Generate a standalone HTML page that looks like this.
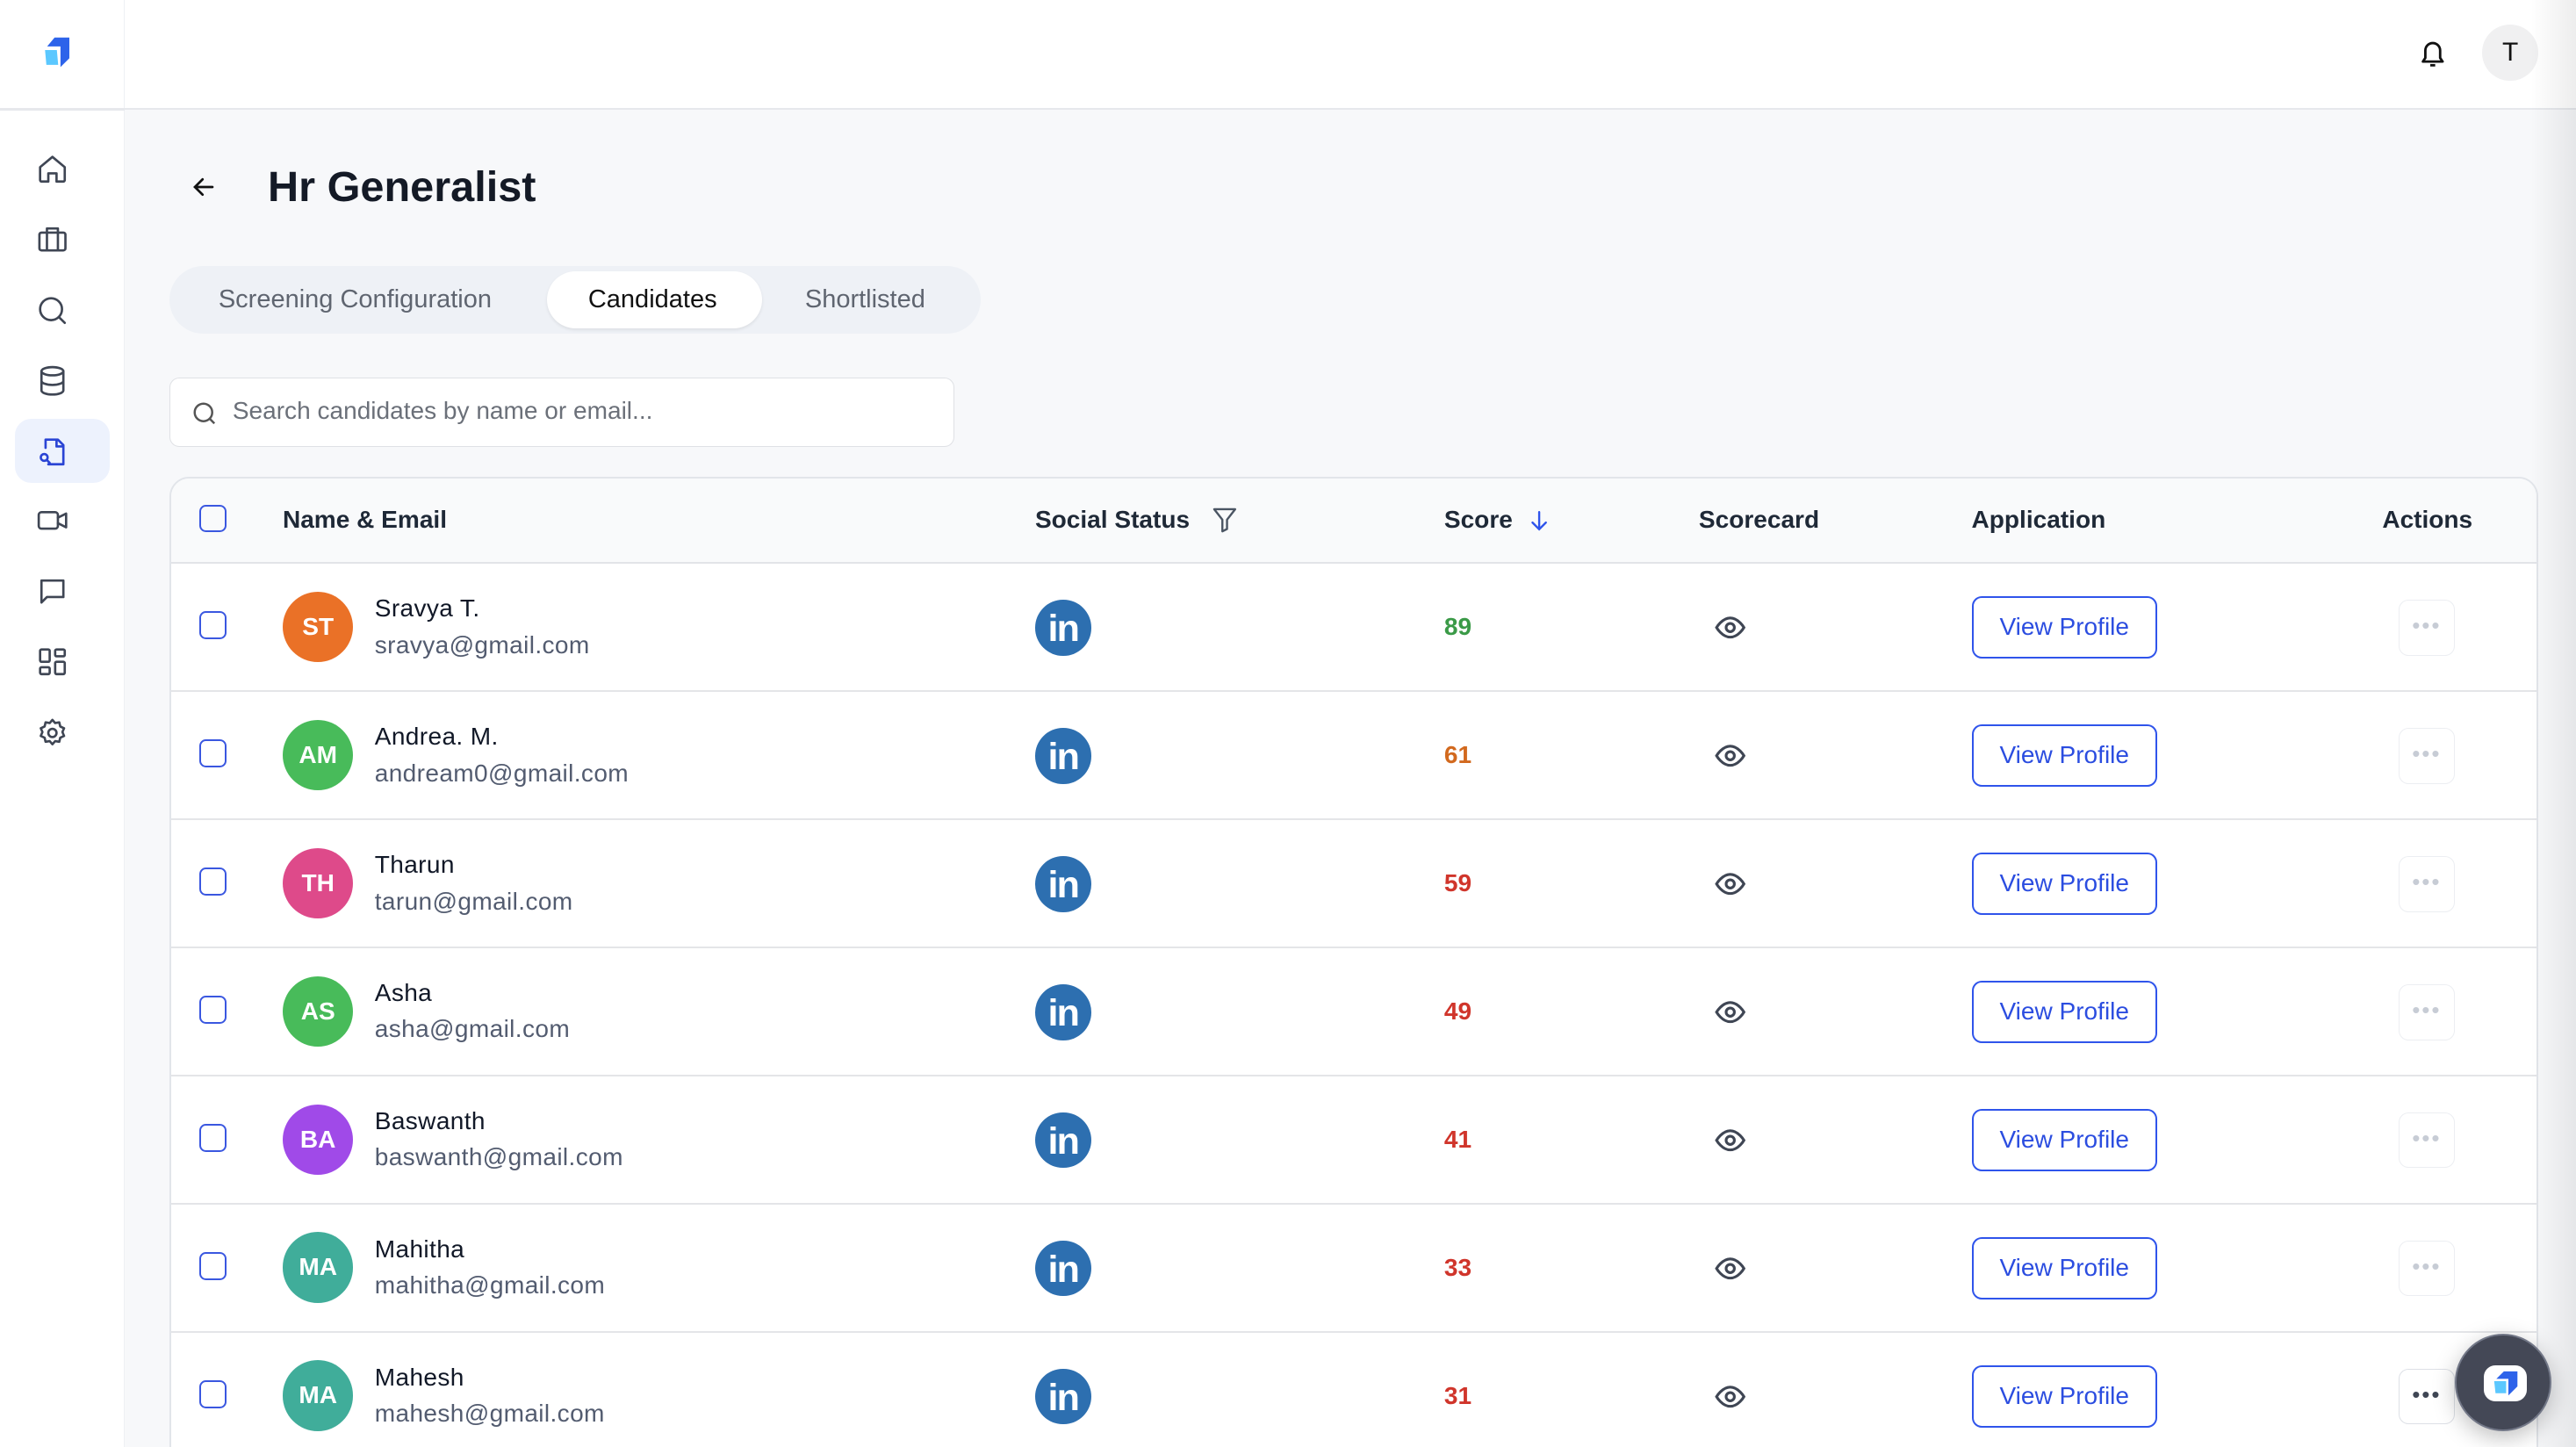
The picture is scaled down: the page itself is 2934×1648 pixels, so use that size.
<!DOCTYPE html>
<html><head><meta charset="utf-8">
<style>
*{box-sizing:border-box;margin:0;padding:0}
html,body{width:2934px;height:1648px;overflow:hidden;background:#f7f8fa}
#w{zoom:1.87117;width:1568px;height:881px;position:relative;font-family:"Liberation Sans",sans-serif;background:#f7f8fa;overflow:hidden}
.a{position:absolute}
.side{left:0;top:0;width:76px;height:881px;background:#fff;border-right:1px solid #eef0f4}
.top{left:76px;top:0;width:1492px;height:67px;background:#fff;border-bottom:1.5px solid #e6e8ec}
.ic{position:absolute;left:22px;width:20px;height:20px}
.ic svg{width:20px;height:20px;fill:none;stroke:#3f4654;stroke-width:1.7;stroke-linecap:round;stroke-linejoin:round}
.tabs{left:103px;top:162px;width:494px;height:41px;background:#eef1f6;border-radius:21px}
.tab{position:absolute;top:0;height:41px;line-height:41px;font-size:15.5px;color:#5f6570}
.search{left:103px;top:230px;width:478px;height:42px;background:#fff;border:1px solid #dfe1e5;border-radius:6px}
.tbl{left:103px;top:290px;width:1442px;height:620px;background:#fff;border:1.5px solid #e2e5ea;border-radius:12px;overflow:hidden}
.hd{position:absolute;left:0;top:0;width:100%;height:52px;background:#f9fafb;border-bottom:1.5px solid #e2e4e8}
.th{position:absolute;top:17px;font-size:15px;font-weight:bold;color:#1f2937}
.row{position:absolute;left:0;width:100%;height:78px;border-bottom:1.5px solid #e4e5e8}
.cb{position:absolute;left:17px;top:29px;width:17px;height:17px;border:1.5px solid #3a57e0;border-radius:4px}
.av{position:absolute;left:68px;top:17px;width:43px;height:43px;border-radius:50%;color:#fff;font-weight:bold;font-size:15px;text-align:center;line-height:43px}
.nm{position:absolute;left:124px;top:19px;font-size:15px;color:#111827;letter-spacing:.2px}
.em{position:absolute;left:124px;top:41px;font-size:15px;color:#535c70;letter-spacing:.2px}
.li{position:absolute;left:526px;top:22px;width:34px;height:34px;border-radius:50%;background:#2d6fb0;color:#fff;font-weight:bold;font-size:23px;text-align:center;line-height:36px;letter-spacing:-1px}
.sc{position:absolute;left:775px;top:30px;font-size:15px;font-weight:bold}
.eye{position:absolute;left:939px;top:29px;width:20px;height:20px}
.vp{position:absolute;left:1096px;top:20px;width:113px;height:38px;border:1.5px solid #2f54eb;border-radius:6px;color:#2b4de0;font-size:15px;text-align:center;line-height:35px}
.dt{position:absolute;left:1356px;top:22px;width:34px;height:34px;border:1px solid #eceef2;border-radius:6px;color:#c7ccd5;font-size:14px;text-align:center;line-height:30px;letter-spacing:1px}
</style></head><body><div id="w">
<div class="a side">
 <svg class="a" style="left:25px;top:21px" width="18" height="22" viewBox="0 0 20 24">
  <polygon points="9,2 19,2 19,16 13,22 13,8 4,8" fill="#2d63ea"/>
  <polygon points="2,10 11,10 12,21 3,21" fill="#5bc8ff" stroke="#fff" stroke-width="1"/>
 </svg>
 <div class="a" style="left:0;top:66px;width:76px;height:1.5px;background:#e6e8ec"></div>
 <div class="a" style="left:9px;top:255px;width:58px;height:39px;background:#edf2fd;border-radius:10px"></div>
 <div class="ic" style="top:93px"><svg viewBox="0 0 24 24"><path d="M3 10.5 12 3l9 7.5V20a1 1 0 0 1-1 1h-5v-6H9v6H4a1 1 0 0 1-1-1z"/></svg></div>
 <div class="ic" style="top:136px"><svg viewBox="0 0 24 24"><rect x="2.5" y="7" width="19" height="13" rx="1.5"/><path d="M8 7V4h8v3M8 7v13M16 7v13"/></svg></div>
 <div class="ic" style="top:179px"><svg viewBox="0 0 24 24"><circle cx="11" cy="11" r="8"/><path d="m17 17 4 4"/></svg></div>
 <div class="ic" style="top:222px"><svg viewBox="0 0 24 24"><ellipse cx="12" cy="5" rx="8" ry="3"/><path d="M4 5v14c0 1.7 3.6 3 8 3s8-1.3 8-3V5M4 12c0 1.7 3.6 3 8 3s8-1.3 8-3"/></svg></div>
 <div class="ic" style="top:265px"><svg viewBox="0 0 24 24" style="stroke:#2a44d4"><path d="M7 9V3h9l4 4v14H9M15 3v5h5"/><circle cx="6" cy="16" r="2.5"/><path d="m8 18 2 2"/></svg></div>
 <div class="ic" style="top:307px"><svg viewBox="0 0 24 24"><rect x="2" y="6" width="14" height="12" rx="2"/><path d="m16 10 6-3v10l-6-3"/></svg></div>
 <div class="ic" style="top:350px"><svg viewBox="0 0 24 24"><path d="M4 4h16v12H8l-4 4z"/></svg></div>
 <div class="ic" style="top:393px"><svg viewBox="0 0 24 24"><rect x="3" y="3" width="7" height="9" rx="1"/><rect x="14" y="3" width="7" height="5" rx="1"/><rect x="14" y="12" width="7" height="9" rx="1"/><rect x="3" y="16" width="7" height="5" rx="1"/></svg></div>
 <div class="ic" style="top:436px"><svg viewBox="0 0 24 24"><circle cx="12" cy="12" r="3"/><path d="M12 2.5l2 2.3 3-.5.7 3 2.8 1.3-1.2 2.8 1.2 2.8-2.8 1.3-.7 3-3-.5-2 2.3-2-2.3-3 .5-.7-3-2.8-1.3 1.2-2.8-1.2-2.8 2.8-1.3.7-3 3 .5z"/></svg></div>
</div>
<div class="a top">
 <svg class="a" style="left:1396px;top:23px" width="18" height="20" viewBox="0 0 24 26" fill="none" stroke="#111" stroke-width="2" stroke-linejoin="round"><path d="M6 10a6 6 0 0 1 12 0v6l2 3H4l2-3z"/><path d="M10 22h4"/></svg>
 <div class="a" style="left:1435px;top:15px;width:34px;height:34px;border-radius:50%;background:#f0f0f1;text-align:center;line-height:34px;font-size:16px;color:#111">T</div>
</div>
<svg class="a" style="left:116px;top:106px" width="16" height="16" viewBox="0 0 24 24" fill="none" stroke="#111" stroke-width="2.2" stroke-linecap="round"><path d="M20 12H5M11 5l-7 7 7 7"/></svg>
<div class="a" style="left:163px;top:99px;font-size:26px;font-weight:bold;color:#141a26">Hr Generalist</div>
<div class="a tabs">
 <div class="tab" style="left:30px">Screening Configuration</div>
 <div class="a" style="left:230px;top:3px;width:131px;height:35px;background:#fff;border-radius:18px;box-shadow:0 1px 2px rgba(0,0,0,.08)"></div>
 <div class="tab" style="left:255px;color:#111">Candidates</div>
 <div class="tab" style="left:387px">Shortlisted</div>
</div>
<div class="a search">
 <svg class="a" style="left:13px;top:13px" width="16" height="16" viewBox="0 0 24 24" fill="none" stroke="#555" stroke-width="2"><circle cx="11" cy="11" r="8"/><path d="m17 17 4 4"/></svg>
 <div class="a" style="left:38px;top:11px;font-size:15px;color:#6b7079">Search candidates by name or email...</div>
</div>
<div class="a tbl">
 <div class="hd">
  <div class="cb" style="top:16px"></div>
  <div class="th" style="left:68px">Name &amp; Email</div>
  <div class="th" style="left:526px">Social Status</div>
  <svg class="a" style="left:633px;top:17px" width="17" height="17" viewBox="0 0 24 24" fill="none" stroke="#4b5563" stroke-width="1.8" stroke-linejoin="round"><path d="M3 3h18l-7 9v8l-4 2V12z"/></svg>
  <div class="th" style="left:775px">Score</div>
  <svg class="a" style="left:826px;top:18px" width="14" height="16" viewBox="0 0 24 24" fill="none" stroke="#2f54eb" stroke-width="2.2" stroke-linecap="round"><path d="M12 3v18M5 14l7 7 7-7"/></svg>
  <div class="th" style="left:930px">Scorecard</div>
  <div class="th" style="left:1096px">Application</div>
  <div class="th" style="left:1346px">Actions</div>
 </div>
 <div class="row" style="top:52px"><div class="cb"></div><div class="av" style="background:#ea7127">ST</div><div class="nm">Sravya T.</div><div class="em">sravya@gmail.com</div><div class="li">in</div><div class="sc" style="color:#3a9a47">89</div><svg class="eye" viewBox="0 0 24 24" fill="none" stroke="#3f4654" stroke-width="2"><path d="M2 12s4-7 10-7 10 7 10 7-4 7-10 7S2 12 2 12z"/><circle cx="12" cy="12" r="3"/></svg><div class="vp">View Profile</div><div class="dt">•••</div></div>
 <div class="row" style="top:130px"><div class="cb"></div><div class="av" style="background:#48bb5a">AM</div><div class="nm">Andrea. M.</div><div class="em">andream0@gmail.com</div><div class="li">in</div><div class="sc" style="color:#d2691e">61</div><svg class="eye" viewBox="0 0 24 24" fill="none" stroke="#3f4654" stroke-width="2"><path d="M2 12s4-7 10-7 10 7 10 7-4 7-10 7S2 12 2 12z"/><circle cx="12" cy="12" r="3"/></svg><div class="vp">View Profile</div><div class="dt">•••</div></div>
 <div class="row" style="top:208px"><div class="cb"></div><div class="av" style="background:#de4a8a">TH</div><div class="nm">Tharun</div><div class="em">tarun@gmail.com</div><div class="li">in</div><div class="sc" style="color:#d0352b">59</div><svg class="eye" viewBox="0 0 24 24" fill="none" stroke="#3f4654" stroke-width="2"><path d="M2 12s4-7 10-7 10 7 10 7-4 7-10 7S2 12 2 12z"/><circle cx="12" cy="12" r="3"/></svg><div class="vp">View Profile</div><div class="dt">•••</div></div>
 <div class="row" style="top:286px"><div class="cb"></div><div class="av" style="background:#48bb5a">AS</div><div class="nm">Asha</div><div class="em">asha@gmail.com</div><div class="li">in</div><div class="sc" style="color:#d0352b">49</div><svg class="eye" viewBox="0 0 24 24" fill="none" stroke="#3f4654" stroke-width="2"><path d="M2 12s4-7 10-7 10 7 10 7-4 7-10 7S2 12 2 12z"/><circle cx="12" cy="12" r="3"/></svg><div class="vp">View Profile</div><div class="dt">•••</div></div>
 <div class="row" style="top:364px"><div class="cb"></div><div class="av" style="background:#a04ae8">BA</div><div class="nm">Baswanth</div><div class="em">baswanth@gmail.com</div><div class="li">in</div><div class="sc" style="color:#d0352b">41</div><svg class="eye" viewBox="0 0 24 24" fill="none" stroke="#3f4654" stroke-width="2"><path d="M2 12s4-7 10-7 10 7 10 7-4 7-10 7S2 12 2 12z"/><circle cx="12" cy="12" r="3"/></svg><div class="vp">View Profile</div><div class="dt">•••</div></div>
 <div class="row" style="top:442px"><div class="cb"></div><div class="av" style="background:#40ad9a">MA</div><div class="nm">Mahitha</div><div class="em">mahitha@gmail.com</div><div class="li">in</div><div class="sc" style="color:#d0352b">33</div><svg class="eye" viewBox="0 0 24 24" fill="none" stroke="#3f4654" stroke-width="2"><path d="M2 12s4-7 10-7 10 7 10 7-4 7-10 7S2 12 2 12z"/><circle cx="12" cy="12" r="3"/></svg><div class="vp">View Profile</div><div class="dt">•••</div></div>
 <div class="row" style="top:520px"><div class="cb"></div><div class="av" style="background:#40ad9a">MA</div><div class="nm">Mahesh</div><div class="em">mahesh@gmail.com</div><div class="li">in</div><div class="sc" style="color:#d0352b">31</div><svg class="eye" viewBox="0 0 24 24" fill="none" stroke="#3f4654" stroke-width="2"><path d="M2 12s4-7 10-7 10 7 10 7-4 7-10 7S2 12 2 12z"/><circle cx="12" cy="12" r="3"/></svg><div class="vp">View Profile</div><div class="dt" style="color:#3f4654;border-color:#dde0e6">•••</div></div>
</div>
<div class="a" style="left:1540px;top:0;width:28px;height:881px;background:linear-gradient(90deg,rgba(0,0,0,0),rgba(0,0,0,.07))"></div>
<div class="a" style="left:1494px;top:812px;width:59px;height:59px;border-radius:50%;background:#444856;border:1.5px solid #737888;box-shadow:0 4px 14px rgba(0,0,0,.25)">
 <div class="a" style="left:17px;top:18px;width:26px;height:22px;background:#fff;border-radius:7px"></div>
 <svg class="a" style="left:19px;top:18px" width="22" height="22" viewBox="0 0 20 24"><polygon points="9,4 18,4 18,14 12,20 12,9 4,9" fill="#2d63ea"/><polygon points="2,10 11,10 11,19 3,19" fill="#5bc8ff" stroke="#fff" stroke-width="1"/></svg>
</div>
</div></body></html>
